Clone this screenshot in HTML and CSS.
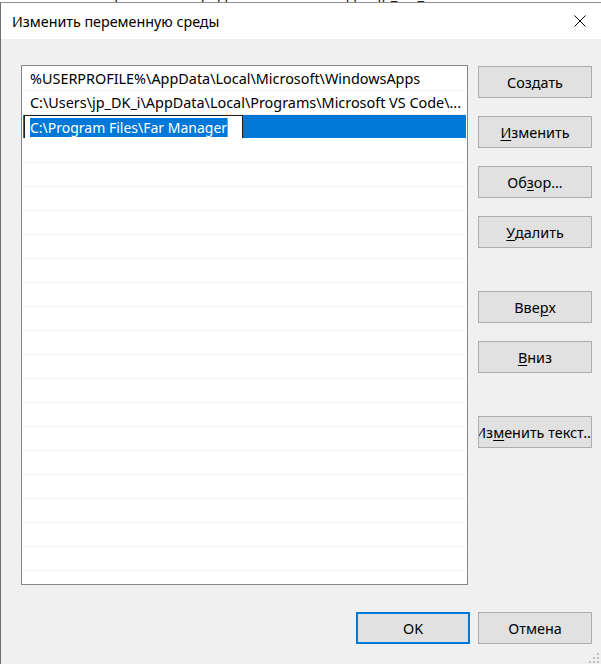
FILE: index.html
```html
<!DOCTYPE html>
<html lang="ru">
<head>
    <meta charset="UTF-8">
    <meta name="viewport" content="width=device-width, initial-scale=1.0">
    <title>Изменить переменную среды</title>
    <link rel="stylesheet" href="styles.css">
</head>
<body>
    <div class="behind">
        <span class="behind-text">Переменные среды пользователя для jp_DK_i</span>
    </div>
    <div class="window">
        <div class="titlebar">
            <span class="title">Изменить переменную среды</span>
            <svg class="close" width="12" height="12" viewBox="0 0 12 12">
                <path d="M0.5 0.5 L11.5 11.5 M11.5 0.5 L0.5 11.5" stroke="#000" stroke-width="1" fill="none"/>
            </svg>
        </div>
        <div class="dialog">
            <div class="main">
                <div class="list">
                    <div class="row">%USERPROFILE%\AppData\Local\Microsoft\WindowsApps</div>
                    <div class="row">C:\Users\jp_DK_i\AppData\Local\Programs\Microsoft VS Code\...</div>
                    <div class="row selected">
                        <span class="edit"><span class="sel">C:\Program Files\Far Manager</span><span class="caret"></span></span>
                    </div>
                    <div class="row"></div>
                    <div class="row"></div>
                    <div class="row"></div>
                    <div class="row"></div>
                    <div class="row"></div>
                    <div class="row"></div>
                    <div class="row"></div>
                    <div class="row"></div>
                    <div class="row"></div>
                    <div class="row"></div>
                    <div class="row"></div>
                    <div class="row"></div>
                    <div class="row"></div>
                    <div class="row"></div>
                    <div class="row"></div>
                    <div class="row"></div>
                    <div class="row"></div>
                    <div class="row"></div>
                    <div class="row"></div>
                </div>
                <div class="buttons">
                    <div class="btn">Соз<u>д</u>ать</div>
                    <div class="btn"><u>И</u>зменить</div>
                    <div class="btn">Об<u>з</u>ор...</div>
                    <div class="btn"><u>У</u>далить</div>
                    <div class="btn spaced">Вве<u>р</u>х</div>
                    <div class="btn"><u>В</u>низ</div>
                    <div class="btn spaced">Из<u>м</u>енить текст...</div>
                </div>
            </div>
            <div class="footer">
                <div class="btn default">OK</div>
                <div class="btn">Отмена</div>
            </div>
            <div class="grip">
                <span></span><span></span><span></span>
                <span></span><span></span><span></span>
                <span></span><span></span><span></span>
            </div>
        </div>
    </div>
</body>
</html>
```

FILE: styles.css
```css
body{
    margin: 0;
    width: 601px;
    height: 664px;
    overflow: hidden;
    background: #fff;
    font-family: "Noto Sans", "Open Sans", sans-serif;
    font-size: 14.4px;
    color: #000;
}

/* окно за диалогом, видна только полоска сверху */
.behind{
    height: 2px;
    overflow: hidden;
    padding-left: 95px;
}
.behind-text{
    display: block;
    margin-top: -15px;
    font-size: 15px;
    line-height: 18px;
    color: #222;
}

.window{
    position: relative;
    height: 662px;
    box-sizing: border-box;
    border-left: 1px solid #707070;
    border-top: 1px solid #8f8f8f;
    display: flex;
    flex-direction: column;
}

.titlebar{
    height: 36px;
    flex-shrink: 0;
    display: flex;
    align-items: center;
    padding-left: 11px;
    background: #fff;
}
.title{
    font-size: 14.3px;
    padding-top: 1px;
}
.close{
    margin-left: auto;
    margin-right: 15px;
}

.dialog{
    flex: 1;
    background: #f0f0f0;
    padding: 26px 9px 0 20px;
}

.main{
    display: flex;
    gap: 10px;
}

.list{
    width: 447px;
    height: 520px;
    box-sizing: border-box;
    border: 1px solid #828790;
    background: #fff;
    padding: 1px 1px 0 1px;
    overflow: hidden;
}
.row{
    height: 24px;
    box-sizing: border-box;
    border-bottom: 1px solid #f0f0f0;
    padding-left: 7px;
    line-height: 23px;
    white-space: nowrap;
    overflow: hidden;
}
.row.selected{
    background: #0078d7;
    padding-left: 1px;
    border-bottom-color: #fff;
}
.edit{
    display: flex;
    align-items: center;
    width: 219px;
    height: 24px;
    box-sizing: border-box;
    border: 1px solid #1e1e1e;
    background: #fff;
    padding-left: 5px;
}
.sel{
    background: #0078d7;
    color: #fff;
    font-size: 14px;
    line-height: 19px;
}
.caret{
    width: 1px;
    height: 19px;
    background: #ff8728;
}

.buttons{
    display: flex;
    flex-direction: column;
    gap: 18px;
    margin-top: 1px;
}
.btn{
    width: 114px;
    height: 32px;
    box-sizing: border-box;
    border: 1px solid #adadad;
    background: #e1e1e1;
    display: flex;
    align-items: center;
    justify-content: center;
    white-space: nowrap;
    overflow: hidden;
}
.btn u{
    text-decoration-thickness: 1px;
    text-underline-offset: 2px;
}
.btn.spaced{
    margin-top: 25px;
}
.btn.default{
    border: 2px solid #0078d7;
}

.footer{
    display: flex;
    justify-content: flex-end;
    gap: 8px;
    margin-top: 27px;
}

.grip{
    position: absolute;
    right: 2px;
    bottom: 1px;
    display: grid;
    grid-template-columns: repeat(3, 2px);
    grid-template-rows: repeat(3, 2px);
    gap: 2px;
}
.grip span{
    background: #bdbdbd;
}
.grip span:nth-child(1),
.grip span:nth-child(2),
.grip span:nth-child(4){
    background: transparent;
}
```
